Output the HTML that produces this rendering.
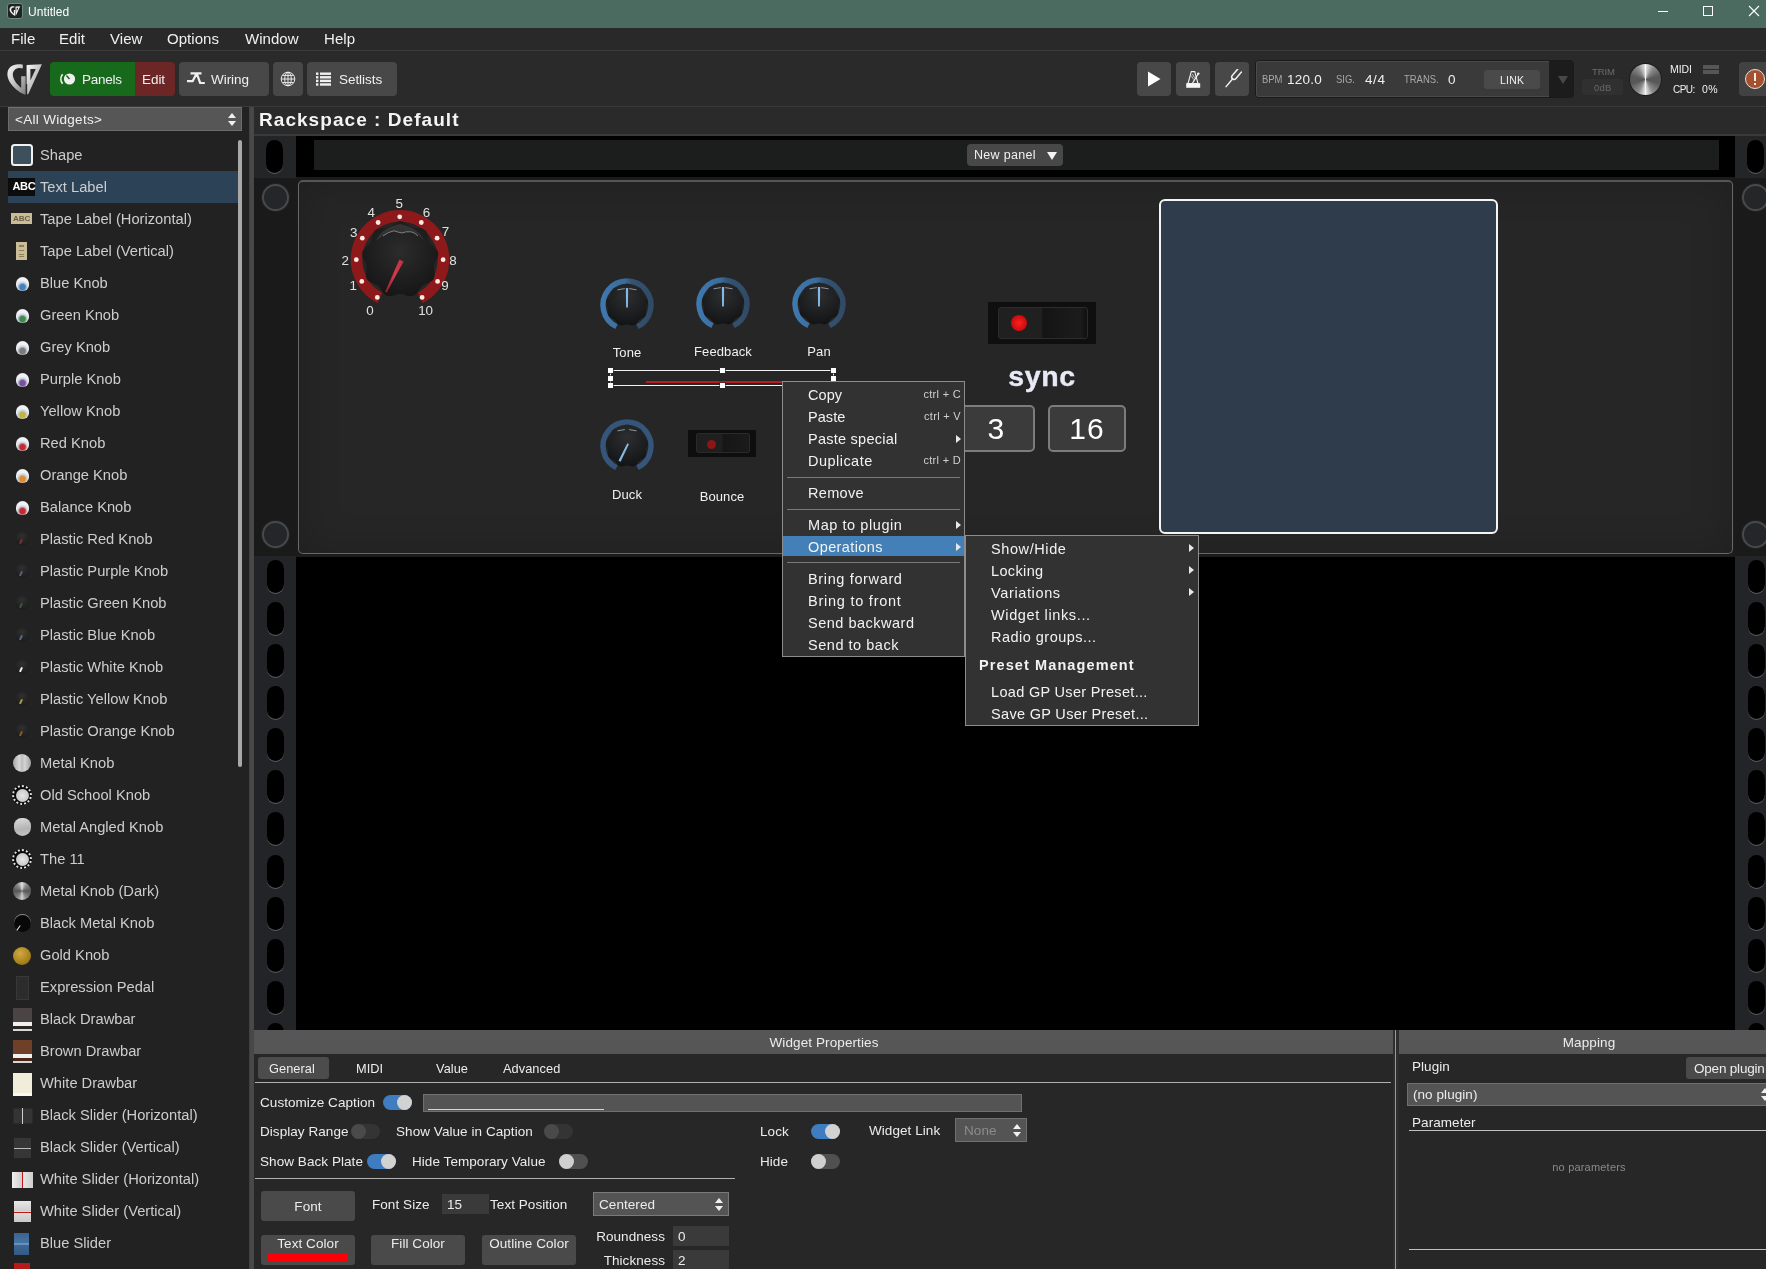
<!DOCTYPE html>
<html>
<head>
<meta charset="utf-8">
<title>Untitled</title>
<style>
*{box-sizing:border-box;margin:0;padding:0}
html,body{width:1766px;height:1269px;overflow:hidden;background:#242424}
body{font-family:"Liberation Sans",sans-serif;color:#e4e4e4;position:relative;font-size:14px;will-change:transform}
.a{position:absolute}
.t{position:absolute;white-space:nowrap;line-height:1}
/* ---------- title bar ---------- */
#titlebar{left:0;top:0;width:1766px;height:28px;background:#4b6b61}
#menubar{left:0;top:28px;width:1766px;height:22px;background:#292929}
#menubar .t{top:3px;font-size:15px;letter-spacing:.05px;color:#f0f0f0}
#toolbar{left:0;top:50px;width:1766px;height:57px;background:#2a2a2a;border-top:1px solid #3c3c3c;border-bottom:1px solid #3a3a3a}
.tb{position:absolute;top:62px;height:34px;background:#484848;border-radius:4px}
.tb .t{top:11px;font-size:13.5px;letter-spacing:-.05px;color:#f0f0f0}
/* ---------- sidebar ---------- */
#sidebar{left:0;top:107px;width:249px;height:1162px;background:#222222}
#divider{left:249px;top:107px;width:5px;height:1162px;background:linear-gradient(90deg,#3e3e3e,#4a4a4a 40%,#464646)}
.li{position:absolute;left:40px;font-size:14.7px;letter-spacing:0px;color:#cdcdcd;white-space:nowrap;line-height:1}
.ic{position:absolute}
/* ---------- center ---------- */
#rshead{left:254px;top:107px;width:1512px;height:28px;background:#2a2a2a}
#rack{left:254px;top:135.5px;width:1512px;height:895.5px;background:#000}
/* ---------- menus ---------- */
.menu{position:absolute;background:#323232;border:1px solid #8c8c8c}
.mi{position:absolute;white-space:nowrap;line-height:1;font-size:14.5px;letter-spacing:.42px;color:#f2f2f2}
.sc{position:absolute;white-space:nowrap;line-height:1;font-size:11px;letter-spacing:.3px;color:#d0d0d0}
.sep{position:absolute;height:1px;background:#7a7a7a}
.arr{position:absolute;width:0;height:0;border-top:4px solid transparent;border-bottom:4px solid transparent;border-left:5px solid #e8e8e8}
/* ---------- props ---------- */
.pl{position:absolute;white-space:nowrap;line-height:1;font-size:13.5px;letter-spacing:.06px;color:#ececec}
.btn{position:absolute;background:#4a4a4a;border-radius:3px}
.tog{position:absolute;width:29px;height:15px;border-radius:8px}
.tog i{position:absolute;top:0;width:15px;height:15px;border-radius:8px;display:block}
.tog.on{background:#3f7cc0}.tog.on i{right:0;background:#d2d2d2}
.tog.off{background:#505050}.tog.off i{left:0;background:#cfcfcf}
.tog.dis{background:#343434}.tog.dis i{left:0;background:#4a4a4a}
</style>
</head>
<body>
<!-- TITLEBAR -->
<div id="titlebar" class="a">
  <svg class="a" style="left:7px;top:3px" width="16" height="16" viewBox="0 0 16 16"><rect x=".5" y=".5" width="15" height="15" rx="2.5" fill="#1f2322" stroke="#6f8a80" stroke-width="1"/><g transform="translate(2.1 2.6) scale(.31)" fill="#f0f0f0"><path d="M16.8 2.8 C12 1.6 6 2.6 3 6.6 C0.4 10.6 1.2 16 4 20.4 C7.2 25.4 12 29.4 18.4 32.6 L19.6 32.6 L19.6 14.2 L15.2 14.2 L15.2 26 C11.6 23 8.2 19 7.2 15 C6.2 11 7.6 8 11 6.6 C13 5.9 15 6 16.8 6.6 Z"/><path fill-rule="evenodd" d="M20.6 2.9 L35.9 2.3 L22.2 32.2 L21.2 32.2 L21.2 22 L20.6 22 Z M24.4 7 L29.8 7 L24.4 18.6 Z"/></g></svg>
  <div class="t" style="left:28px;top:6px;font-size:12px;letter-spacing:.08px;color:#fff">Untitled</div>
  <div class="a" style="left:1658px;top:11px;width:10px;height:1px;background:#fff"></div>
  <div class="a" style="left:1703px;top:6px;width:10px;height:10px;border:1px solid #fff"></div>
  <svg class="a" style="left:1748px;top:5px" width="12" height="12" viewBox="0 0 12 12"><path d="M1 1L11 11M11 1L1 11" stroke="#fff" stroke-width="1.1" fill="none"/></svg>
</div>
<div id="menubar" class="a">
  <div class="t" style="left:11px">File</div>
  <div class="t" style="left:59px">Edit</div>
  <div class="t" style="left:110px">View</div>
  <div class="t" style="left:167px">Options</div>
  <div class="t" style="left:245px">Window</div>
  <div class="t" style="left:324px">Help</div>
</div>
<div id="toolbar" class="a"></div>
<!-- toolbar items (absolute to body) -->
<svg class="a" style="left:6px;top:62px" width="38" height="34" viewBox="0 0 38 34">
  <defs><linearGradient id="gpg" x1="0" y1="0" x2="1" y2="1"><stop offset="0" stop-color="#fafafa"/><stop offset=".5" stop-color="#c4c4c4"/><stop offset="1" stop-color="#7a7a7a"/></linearGradient></defs>
  <path d="M16.8 2.8 C12 1.6 6 2.6 3 6.6 C0.4 10.6 1.2 16 4 20.4 C7.2 25.4 12 29.4 18.4 32.6 L19.6 32.6 L19.6 14.2 L15.2 14.2 L15.2 26 C11.6 23 8.2 19 7.2 15 C6.2 11 7.6 8 11 6.6 C13 5.9 15 6 16.8 6.6 Z" fill="url(#gpg)"/>
  <path fill-rule="evenodd" d="M20.6 2.9 L35.9 2.3 L22.2 32.2 L21.2 32.2 L21.2 22 L20.6 22 Z M24.4 7 L29.8 7 L24.4 18.6 Z" fill="url(#gpg)"/>
</svg>
<div class="tb" style="left:50px;width:85px;background:#176a1b;border-radius:4px 0 0 4px">
  <svg class="a" style="left:9px;top:9px" width="18" height="16" viewBox="0 0 18 16"><circle cx="10.5" cy="8" r="5.6" fill="#f0f0f0"/><path d="M10.5 8 L7.4 4.6" stroke="#176a1b" stroke-width="1.5"/><path d="M3.6 3.2 A7.6 7.6 0 0 0 3.6 12.8" stroke="#f0f0f0" stroke-width="1.7" fill="none"/></svg>
  <div class="t" style="left:32px;letter-spacing:-.25px">Panels</div>
</div>
<div class="tb" style="left:135px;width:40px;background:#6c2626;border-radius:0 4px 4px 0"><div class="t" style="left:7px">Edit</div></div>
<div class="tb" style="left:179px;width:90px">
  <svg class="a" style="left:7px;top:9px" width="20" height="15" viewBox="0 0 20 15"><path d="M4.5 2.4 H15.5 M1 10.2 H6.6 L10.2 3.2 M11 3.2 L14.2 12 H18.8" stroke="#f0f0f0" stroke-width="2.2" fill="none" stroke-linejoin="round"/></svg>
  <div class="t" style="left:32px">Wiring</div>
</div>
<div class="tb" style="left:273px;width:30px">
  <svg class="a" style="left:7px;top:9px" width="16" height="16" viewBox="0 0 16 16"><g stroke="#f0f0f0" stroke-width=".95" fill="none"><circle cx="8" cy="8" r="6.8"/><ellipse cx="8" cy="8" rx="3.3" ry="6.8"/><path d="M1.2 8H14.8M8 1.2V14.8M2.6 4.4H13.4M2.6 11.6H13.4"/></g></svg>
</div>
<div class="tb" style="left:307px;width:90px">
  <svg class="a" style="left:9px;top:10px" width="15" height="14" viewBox="0 0 15 14"><g fill="#f0f0f0"><rect x="0" y="0.5" width="2.4" height="2.4"/><rect x="4" y="0.5" width="11" height="2.4"/><rect x="0" y="4.1" width="2.4" height="2.4"/><rect x="4" y="4.1" width="11" height="2.4"/><rect x="0" y="7.7" width="2.4" height="2.4"/><rect x="4" y="7.7" width="11" height="2.4"/><rect x="0" y="11.3" width="2.4" height="2.4"/><rect x="4" y="11.3" width="11" height="2.4"/></g></svg>
  <div class="t" style="left:32px">Setlists</div>
</div>
<!-- transport -->
<div class="tb" style="left:1137px;width:34px"><svg class="a" style="left:10px;top:9px" width="14" height="16" viewBox="0 0 14 16"><path d="M1 0.5L13.5 8L1 15.5Z" fill="#fff"/></svg></div>
<div class="tb" style="left:1176px;width:34px"><svg class="a" style="left:9px;top:8px" width="17" height="19" viewBox="0 0 17 19"><path d="M6.3 1.6H9.7L13 13.5H3Z" fill="none" stroke="#f0f0f0" stroke-width="1.1"/><rect x="1.2" y="13.2" width="14" height="4.6" fill="#f6f6f6"/><path d="M7.6 13L13.4 3.6" stroke="#f6f6f6" stroke-width="1.2"/><circle cx="13.3" cy="3.6" r="1.2" fill="#f6f6f6"/><path d="M6.2 5.5L8.6 9.5M7.4 4L9.6 7.8" stroke="#f0f0f0" stroke-width=".7"/></svg></div>
<div class="tb" style="left:1215px;width:34px"><svg class="a" style="left:8px;top:7px" width="19" height="20" viewBox="0 0 19 20"><g transform="translate(10.5 8.8) rotate(40)" stroke="#f0f0f0" stroke-width="1.5" fill="none" stroke-linecap="round"><path d="M0 11.5V1.6"/><path d="M-2.4 -9.5V-1 A2.4 2.4 0 0 0 2.4 -1V-9.5"/></g></svg></div>
<div class="a" style="left:1255px;top:60px;width:319px;height:38px;background:#1c1c1c;border-radius:4px;border:1px solid #1a1a1a"></div>
<div class="a" style="left:1256px;top:61px;width:293px;height:36px;background:#3a3a3a;border-radius:3px 0 0 3px;border:1px solid #4a4a4a;border-right:0"></div>
<div class="t" style="left:1262px;top:74px;font-size:10.5px;letter-spacing:0;color:#a8a8a8;transform:scaleX(.9);transform-origin:0 50%">BPM</div>
<div class="t" style="left:1287px;top:73px;font-size:13.5px;letter-spacing:.25px;color:#f0f0f0">120.0</div>
<div class="t" style="left:1336px;top:74px;font-size:10.5px;letter-spacing:0;color:#a8a8a8;transform:scaleX(.9);transform-origin:0 50%">SIG.</div>
<div class="t" style="left:1365px;top:73px;font-size:13.5px;letter-spacing:.6px;color:#f0f0f0">4/4</div>
<div class="t" style="left:1404px;top:74px;font-size:10.5px;letter-spacing:0;color:#a8a8a8;transform:scaleX(.9);transform-origin:0 50%">TRANS.</div>
<div class="t" style="left:1448px;top:73px;font-size:13.5px;letter-spacing:.4px;color:#f0f0f0">0</div>
<div class="a" style="left:1484px;top:70px;width:56px;height:19px;background:#4a4a4a;border-radius:3px"></div>
<div class="t" style="left:1500px;top:75px;font-size:10.5px;letter-spacing:.2px;color:#f0f0f0">LINK</div>
<div class="a" style="left:1558px;top:76px;width:0;height:0;border-left:5px solid transparent;border-right:5px solid transparent;border-top:8px solid #484848"></div>
<div class="t" style="left:1592px;top:67px;font-size:9.5px;letter-spacing:-.1px;color:#6c6c6c">TRIM</div>
<div class="a" style="left:1582px;top:79px;width:41px;height:16px;background:#303030;border-radius:2px"></div>
<div class="t" style="left:1594px;top:83px;font-size:9.5px;letter-spacing:.2px;color:#686868">0dB</div>
<div class="a" style="left:1629px;top:63px;width:33px;height:33px;border-radius:17px;background:#1c1c1c"></div>
<div class="a" style="left:1630px;top:64px;width:31px;height:31px;border-radius:16px;background:conic-gradient(from 0deg,#f2f2f2 0deg,#cfcfcf 8deg,#8a8a8a 35deg,#5a5a5a 75deg,#565656 105deg,#8c8c8c 150deg,#dcdcdc 175deg,#ededed 180deg,#dcdcdc 185deg,#8c8c8c 210deg,#565656 255deg,#5a5a5a 285deg,#8a8a8a 325deg,#cfcfcf 352deg,#f2f2f2 360deg)"></div>
<div class="a" style="left:1645px;top:65px;width:1.4px;height:29px;background:linear-gradient(#fff,rgba(255,255,255,.15) 45%,rgba(255,255,255,.15) 55%,#f4f4f4)"></div>
<div class="t" style="left:1670px;top:64px;font-size:10.5px;letter-spacing:-.05px;color:#f0f0f0">MIDI</div>
<div class="a" style="left:1703px;top:65px;width:16px;height:3.5px;background:#565656"></div>
<div class="a" style="left:1703px;top:70px;width:16px;height:3.5px;background:#565656"></div>
<div class="t" style="left:1673px;top:85px;font-size:10px;letter-spacing:-.55px;color:#f0f0f0">CPU:</div>
<div class="t" style="left:1702px;top:84px;font-size:10.5px;letter-spacing:.5px;color:#f0f0f0">0%</div>
<div class="tb" style="left:1739px;width:34px;background:#424242"><div class="a" style="left:6px;top:7px;width:20px;height:20px;border-radius:10px;background:#a5502f;border:1.5px solid #e9dfd8"></div><div class="a" style="left:15px;top:11px;width:2.4px;height:8px;background:#f2ece8"></div><div class="a" style="left:15px;top:21px;width:2.4px;height:2.4px;background:#f2ece8"></div></div>
<!-- SIDEBAR -->
<div id="sidebar" class="a">
<div class="a" style="left:8px;top:0px;width:234px;height:24px;background:#565656;border:1px solid #6c6c6c;border-top-color:#707070"></div>
<div class="t" style="left:15px;top:6px;font-size:13.5px;letter-spacing:.3px;color:#f0f0f0">&lt;All Widgets&gt;</div>
<div class="a" style="left:228px;top:6px;width:0;height:0;border-left:4px solid transparent;border-right:4px solid transparent;border-bottom:5px solid #f0f0f0"></div>
<div class="a" style="left:228px;top:14px;width:0;height:0;border-left:4px solid transparent;border-right:4px solid transparent;border-top:5px solid #f0f0f0"></div>
<div class="a" style="left:8px;top:64px;width:230px;height:32px;background:#2b4257"></div>
<div class="a" style="left:238px;top:33px;width:4px;height:627px;background:#a9a9a9;border-radius:2px"></div>
<div class="li" style="top:41px">Shape</div>
<div class="a" style="left:11px;top:37px;width:22px;height:22px;background:#3e505c;border:2px solid #eef2f2;border-radius:3.5px"></div>
<div class="li" style="top:73px">Text Label</div>
<div class="a" style="left:8px;top:71px;width:27px;height:18px;background:#0c0c0c"></div>
<div class="t" style="left:12.5px;top:74px;font-size:11px;font-weight:bold;letter-spacing:-.35px;color:#fff">ABC</div>
<div class="li" style="top:105px">Tape Label (Horizontal)</div>
<div class="a" style="left:11px;top:106px;width:21px;height:11px;background:#c9bc96"></div>
<div class="t" style="left:13px;top:108px;font-size:8px;font-weight:bold;color:#6a6048">ABC</div>
<div class="li" style="top:137px">Tape Label (Vertical)</div>
<div class="a" style="left:16px;top:135px;width:11px;height:18px;background:#c9bc96"></div>
<div class="a" style="left:19px;top:138px;width:5px;height:12px;border:1px solid #8a7e5e;border-left:0;border-right:0;background:repeating-linear-gradient(#8a7e5e 0 1px,transparent 1px 4px)"></div>
<div class="li" style="top:169px">Blue Knob</div>
<div class="a" style="left:16px;top:170px;width:12.5px;height:13.5px;border-radius:6.5px 6.5px 6px 6px;background:radial-gradient(circle at 50% 72%,#3f82c0 0 2.6px,#c9d2dc 4.6px,#eef1f5 6.5px)"></div>
<div class="li" style="top:201px">Green Knob</div>
<div class="a" style="left:16px;top:202px;width:12.5px;height:13.5px;border-radius:6.5px 6.5px 6px 6px;background:radial-gradient(circle at 50% 72%,#3f8a4a 0 2.6px,#c9d2dc 4.6px,#eef1f5 6.5px)"></div>
<div class="li" style="top:233px">Grey Knob</div>
<div class="a" style="left:16px;top:234px;width:12.5px;height:13.5px;border-radius:6.5px 6.5px 6px 6px;background:radial-gradient(circle at 50% 72%,#7a7a7a 0 2.6px,#c9d2dc 4.6px,#eef1f5 6.5px)"></div>
<div class="li" style="top:265px">Purple Knob</div>
<div class="a" style="left:16px;top:266px;width:12.5px;height:13.5px;border-radius:6.5px 6.5px 6px 6px;background:radial-gradient(circle at 50% 72%,#7d4fa0 0 2.6px,#c9d2dc 4.6px,#eef1f5 6.5px)"></div>
<div class="li" style="top:297px">Yellow Knob</div>
<div class="a" style="left:16px;top:298px;width:12.5px;height:13.5px;border-radius:6.5px 6.5px 6px 6px;background:radial-gradient(circle at 50% 72%,#c4b43c 0 2.6px,#c9d2dc 4.6px,#eef1f5 6.5px)"></div>
<div class="li" style="top:329px">Red Knob</div>
<div class="a" style="left:16px;top:330px;width:12.5px;height:13.5px;border-radius:6.5px 6.5px 6px 6px;background:radial-gradient(circle at 50% 72%,#c42a30 0 2.6px,#c9d2dc 4.6px,#eef1f5 6.5px)"></div>
<div class="li" style="top:361px">Orange Knob</div>
<div class="a" style="left:16px;top:362px;width:12.5px;height:13.5px;border-radius:6.5px 6.5px 6px 6px;background:radial-gradient(circle at 50% 72%,#e58a2c 0 2.6px,#c9d2dc 4.6px,#eef1f5 6.5px)"></div>
<div class="li" style="top:393px">Balance Knob</div>
<div class="a" style="left:16px;top:394px;width:12.5px;height:13.5px;border-radius:6.5px 6.5px 6px 6px;background:radial-gradient(circle at 50% 72%,#c42a30 0 2.6px,#c9d2dc 4.6px,#eef1f5 6.5px)"></div>
<div class="li" style="top:425px">Plastic Red Knob</div>
<div class="a" style="left:15px;top:425px;width:14px;height:14px;border-radius:7px;background:radial-gradient(circle at 50% 30%,#303030,#222 55%,#161616)"></div>
<div class="a" style="left:20px;top:432px;width:1.6px;height:5px;background:#8a2a2a;transform:rotate(25deg)"></div>
<div class="li" style="top:457px">Plastic Purple Knob</div>
<div class="a" style="left:15px;top:457px;width:14px;height:14px;border-radius:7px;background:radial-gradient(circle at 50% 30%,#303030,#222 55%,#161616)"></div>
<div class="a" style="left:20px;top:464px;width:1.6px;height:5px;background:#6a5a7a;transform:rotate(25deg)"></div>
<div class="li" style="top:489px">Plastic Green Knob</div>
<div class="a" style="left:15px;top:489px;width:14px;height:14px;border-radius:7px;background:radial-gradient(circle at 50% 30%,#303030,#222 55%,#161616)"></div>
<div class="a" style="left:20px;top:496px;width:1.6px;height:5px;background:#3a5a3a;transform:rotate(25deg)"></div>
<div class="li" style="top:521px">Plastic Blue Knob</div>
<div class="a" style="left:15px;top:521px;width:14px;height:14px;border-radius:7px;background:radial-gradient(circle at 50% 30%,#303030,#222 55%,#161616)"></div>
<div class="a" style="left:20px;top:528px;width:1.6px;height:5px;background:#5a6a8a;transform:rotate(25deg)"></div>
<div class="li" style="top:553px">Plastic White Knob</div>
<div class="a" style="left:15px;top:553px;width:14px;height:14px;border-radius:7px;background:radial-gradient(circle at 50% 30%,#303030,#222 55%,#161616)"></div>
<div class="a" style="left:20px;top:560px;width:1.6px;height:5px;background:#f0f0f0;transform:rotate(25deg)"></div>
<div class="li" style="top:585px">Plastic Yellow Knob</div>
<div class="a" style="left:15px;top:585px;width:14px;height:14px;border-radius:7px;background:radial-gradient(circle at 50% 30%,#303030,#222 55%,#161616)"></div>
<div class="a" style="left:20px;top:592px;width:1.6px;height:5px;background:#aa9a3a;transform:rotate(25deg)"></div>
<div class="li" style="top:617px">Plastic Orange Knob</div>
<div class="a" style="left:15px;top:617px;width:14px;height:14px;border-radius:7px;background:radial-gradient(circle at 50% 30%,#303030,#222 55%,#161616)"></div>
<div class="a" style="left:20px;top:624px;width:1.6px;height:5px;background:#8a5a2a;transform:rotate(25deg)"></div>
<div class="li" style="top:649px">Metal Knob</div>
<div class="a" style="left:13px;top:647px;width:18px;height:18px;border-radius:9px;background:linear-gradient(90deg,#a8a8a8,#d8d8d8 35%,#bcbcbc 50%,#d4d4d4 65%,#a0a0a0)"></div>
<div class="li" style="top:681px">Old School Knob</div>
<div class="a" style="left:12px;top:678px;width:20px;height:20px;border-radius:10px;background:#0a0a0a;border:2px dotted #e0e0e0"></div>
<div class="a" style="left:15.5px;top:681.5px;width:13px;height:13px;border-radius:7px;background:radial-gradient(#e6e6e6,#bdbdbd)"></div>
<div class="li" style="top:713px">Metal Angled Knob</div>
<div class="a" style="left:14px;top:711px;width:16.5px;height:18px;border-radius:8px 8px 9px 9px;background:linear-gradient(170deg,#dcdcdc,#b4b4b4 60%,#c8c8c8)"></div>
<div class="li" style="top:745px">The 11</div>
<div class="a" style="left:12px;top:742px;width:20px;height:20px;border-radius:10px;background:#0a0a0a;border:2px dotted #e0e0e0"></div>
<div class="a" style="left:15.5px;top:745.5px;width:13px;height:13px;border-radius:7px;background:radial-gradient(#e6e6e6,#bdbdbd)"></div>
<div class="li" style="top:777px">Metal Knob (Dark)</div>
<div class="a" style="left:13px;top:775px;width:18px;height:18px;border-radius:9px;background:conic-gradient(from 0deg,#e0e0e0,#8a8a8a 35deg,#555 90deg,#8a8a8a 150deg,#d0d0d0 180deg,#8a8a8a 210deg,#555 270deg,#8a8a8a 325deg,#e0e0e0)"></div>
<div class="li" style="top:809px">Black Metal Knob</div>
<div class="a" style="left:14px;top:808px;width:16.5px;height:16.5px;border-radius:9px;background:#080808;box-shadow:0 -1px 0 0 #8a8a8a"></div>
<div class="a" style="left:18px;top:818px;width:1.4px;height:6px;background:#e0e0e0;transform:rotate(35deg)"></div>
<div class="li" style="top:841px">Gold Knob</div>
<div class="a" style="left:13px;top:840px;width:17.5px;height:17.5px;border-radius:9px;background:radial-gradient(circle at 40% 35%,#d2a944,#a8821e 60%,#7a5c12)"></div>
<div class="li" style="top:873px">Expression Pedal</div>
<div class="a" style="left:16px;top:869px;width:13px;height:24px;background:#2c2c2c;border:1px solid #383838"></div>
<div class="li" style="top:905px">Black Drawbar</div>
<div class="a" style="left:13px;top:901px;width:19px;height:14px;background:#4a4544"></div>
<div class="a" style="left:13px;top:915px;width:19px;height:4px;background:#f0f0f0"></div>
<div class="a" style="left:13px;top:919px;width:19px;height:3px;background:#2a2624"></div>
<div class="a" style="left:13px;top:922px;width:19px;height:2px;background:#d8d8d8"></div>
<div class="li" style="top:937px">Brown Drawbar</div>
<div class="a" style="left:13px;top:933px;width:19px;height:14px;background:#6f3f27"></div>
<div class="a" style="left:13px;top:947px;width:19px;height:4px;background:#f0f0f0"></div>
<div class="a" style="left:13px;top:951px;width:19px;height:3px;background:#4a2512"></div>
<div class="a" style="left:13px;top:954px;width:19px;height:2px;background:#d8d8d8"></div>
<div class="li" style="top:969px">White Drawbar</div>
<div class="a" style="left:13px;top:966px;width:19px;height:23px;background:#f1eddb;border-bottom:3px solid #fbf9ee"></div>
<div class="li" style="top:1001px">Black Slider (Horizontal)</div>
<div class="a" style="left:13px;top:1001px;width:20px;height:16px;background:#343434;border:1px solid #2a2a2a"></div>
<div class="a" style="left:22px;top:1001px;width:1px;height:16px;background:#d0d0d0"></div>
<div class="li" style="top:1033px">Black Slider (Vertical)</div>
<div class="a" style="left:14px;top:1031px;width:17px;height:20px;background:#363636"></div>
<div class="a" style="left:14px;top:1041px;width:17px;height:1px;background:#b8b8b8"></div>
<div class="li" style="top:1065px">White Slider (Horizontal)</div>
<div class="a" style="left:12px;top:1065px;width:21px;height:16px;background:linear-gradient(90deg,#efefef,#d0d0d0 45%,#e4e4e4 55%,#cfcfcf)"></div>
<div class="a" style="left:22px;top:1065px;width:1px;height:16px;background:#c01818"></div>
<div class="li" style="top:1097px">White Slider (Vertical)</div>
<div class="a" style="left:14px;top:1094px;width:17px;height:21px;background:linear-gradient(#e8e8e8,#cfcfcf 45%,#dedede 55%,#c8c8c8)"></div>
<div class="a" style="left:14px;top:1105px;width:17px;height:1px;background:#c01818"></div>
<div class="li" style="top:1129px">Blue Slider</div>
<div class="a" style="left:14px;top:1126px;width:15px;height:22px;background:linear-gradient(#3a6490,#4674a4 45%,#86a8cc 50%,#3c6694 56%,#345a84)"></div>
<div class="a" style="left:14px;top:1156px;width:16px;height:8px;background:#b41c1c"></div>
</div>
<div id="divider" class="a"></div>
<!-- CENTER -->
<div id="rshead" class="a"></div>
<div id="rack" class="a"></div>
<!-- RACK CONTENT -->
<div class="t" style="left:259px;top:110px;font-size:19px;font-weight:bold;letter-spacing:1.05px;color:#f4f4f4">Rackspace : Default</div>
<div class="a" style="left:254px;top:135px;width:42px;height:43px;background:#242527"></div>
<div class="a" style="left:254px;top:178px;width:42px;height:378px;background:#1a1a1a"></div>
<div class="a" style="left:254px;top:556px;width:42px;height:475px;background:#232427"></div>
<div class="a" style="left:1735px;top:135px;width:31px;height:43px;background:#242527"></div>
<div class="a" style="left:1735px;top:178px;width:31px;height:378px;background:#1a1a1a"></div>
<div class="a" style="left:1735px;top:556px;width:31px;height:475px;background:#232427"></div>
<div class="a" style="left:266px;top:140px;width:17px;height:33px;border-radius:9px;background:#000;box-shadow:0 1px 0 0 #5a5c60"></div>
<div class="a" style="left:1747px;top:140px;width:17px;height:33px;border-radius:9px;background:#000;box-shadow:0 1px 0 0 #5a5c60"></div>
<div class="a" style="left:254px;top:556px;width:1512px;height:475px;overflow:hidden;background:transparent">
<div class="a" style="left:12.5px;top:4px;width:17px;height:33px;border-radius:9px;background:#000;box-shadow:0 1px 0 0 #5a5c60"></div>
<div class="a" style="left:1493.5px;top:4px;width:17px;height:33px;border-radius:9px;background:#000;box-shadow:0 1px 0 0 #5a5c60"></div>
<div class="a" style="left:12.5px;top:46px;width:17px;height:33px;border-radius:9px;background:#000;box-shadow:0 1px 0 0 #5a5c60"></div>
<div class="a" style="left:1493.5px;top:46px;width:17px;height:33px;border-radius:9px;background:#000;box-shadow:0 1px 0 0 #5a5c60"></div>
<div class="a" style="left:12.5px;top:88px;width:17px;height:33px;border-radius:9px;background:#000;box-shadow:0 1px 0 0 #5a5c60"></div>
<div class="a" style="left:1493.5px;top:88px;width:17px;height:33px;border-radius:9px;background:#000;box-shadow:0 1px 0 0 #5a5c60"></div>
<div class="a" style="left:12.5px;top:130px;width:17px;height:33px;border-radius:9px;background:#000;box-shadow:0 1px 0 0 #5a5c60"></div>
<div class="a" style="left:1493.5px;top:130px;width:17px;height:33px;border-radius:9px;background:#000;box-shadow:0 1px 0 0 #5a5c60"></div>
<div class="a" style="left:12.5px;top:172px;width:17px;height:33px;border-radius:9px;background:#000;box-shadow:0 1px 0 0 #5a5c60"></div>
<div class="a" style="left:1493.5px;top:172px;width:17px;height:33px;border-radius:9px;background:#000;box-shadow:0 1px 0 0 #5a5c60"></div>
<div class="a" style="left:12.5px;top:214px;width:17px;height:33px;border-radius:9px;background:#000;box-shadow:0 1px 0 0 #5a5c60"></div>
<div class="a" style="left:1493.5px;top:214px;width:17px;height:33px;border-radius:9px;background:#000;box-shadow:0 1px 0 0 #5a5c60"></div>
<div class="a" style="left:12.5px;top:256px;width:17px;height:33px;border-radius:9px;background:#000;box-shadow:0 1px 0 0 #5a5c60"></div>
<div class="a" style="left:1493.5px;top:256px;width:17px;height:33px;border-radius:9px;background:#000;box-shadow:0 1px 0 0 #5a5c60"></div>
<div class="a" style="left:12.5px;top:299px;width:17px;height:33px;border-radius:9px;background:#000;box-shadow:0 1px 0 0 #5a5c60"></div>
<div class="a" style="left:1493.5px;top:299px;width:17px;height:33px;border-radius:9px;background:#000;box-shadow:0 1px 0 0 #5a5c60"></div>
<div class="a" style="left:12.5px;top:341px;width:17px;height:33px;border-radius:9px;background:#000;box-shadow:0 1px 0 0 #5a5c60"></div>
<div class="a" style="left:1493.5px;top:341px;width:17px;height:33px;border-radius:9px;background:#000;box-shadow:0 1px 0 0 #5a5c60"></div>
<div class="a" style="left:12.5px;top:383px;width:17px;height:33px;border-radius:9px;background:#000;box-shadow:0 1px 0 0 #5a5c60"></div>
<div class="a" style="left:1493.5px;top:383px;width:17px;height:33px;border-radius:9px;background:#000;box-shadow:0 1px 0 0 #5a5c60"></div>
<div class="a" style="left:12.5px;top:425px;width:17px;height:33px;border-radius:9px;background:#000;box-shadow:0 1px 0 0 #5a5c60"></div>
<div class="a" style="left:1493.5px;top:425px;width:17px;height:33px;border-radius:9px;background:#000;box-shadow:0 1px 0 0 #5a5c60"></div>
<div class="a" style="left:12.5px;top:467px;width:17px;height:33px;border-radius:9px;background:#000;box-shadow:0 1px 0 0 #5a5c60"></div>
<div class="a" style="left:1493.5px;top:467px;width:17px;height:33px;border-radius:9px;background:#000;box-shadow:0 1px 0 0 #5a5c60"></div>
</div>
<div class="a" style="left:262px;top:184px;width:27px;height:27px;border-radius:14px;background:#252627;border:2.5px solid #464a4e;box-shadow:0 0 0 1px #222324"></div>
<div class="a" style="left:262px;top:521px;width:27px;height:27px;border-radius:14px;background:#252627;border:2.5px solid #464a4e;box-shadow:0 0 0 1px #222324"></div>
<div class="a" style="left:1742px;top:184px;width:27px;height:27px;border-radius:14px;background:#252627;border:2.5px solid #464a4e;box-shadow:0 0 0 1px #222324"></div>
<div class="a" style="left:1742px;top:521px;width:27px;height:27px;border-radius:14px;background:#252627;border:2.5px solid #464a4e;box-shadow:0 0 0 1px #222324"></div>
<div class="a" style="left:296px;top:177px;width:1439px;height:379.5px;background:#1b1b1b"></div>
<div class="a" style="left:254px;top:134px;width:1512px;height:1.5px;background:#3a3a3a"></div>
<div class="a" style="left:314px;top:140px;width:1405px;height:30px;background:#1c1e1e"></div>
<div class="a" style="left:967px;top:144px;width:96px;height:22px;background:#484848;border-radius:4px"></div>
<div class="t" style="left:974px;top:149px;font-size:12.5px;letter-spacing:.3px;color:#f0f0f0">New panel</div>
<div class="a" style="left:1047px;top:152px;width:0;height:0;border-left:5px solid transparent;border-right:5px solid transparent;border-top:8px solid #f4f4f4"></div>
<div class="a" style="left:298px;top:180px;width:1435px;height:374px;background:#262626;border:1px solid #686868;border-top:2px solid #565656;border-radius:5px;box-shadow:inset 0 0 40px rgba(0,0,0,.18)"></div>
<div class="a" style="left:1159px;top:199px;width:339px;height:335px;background:#2e3c4c;border:2px solid #f4f4f4;border-radius:6px"></div>
<svg class="a" style="left:320px;top:181px" width="160" height="160" viewBox="320 181 160 160"><defs><radialGradient id="bk" cx=".5" cy=".4" r=".7"><stop offset="0" stop-color="#2c2c2c"/><stop offset=".6" stop-color="#1d1d1d"/><stop offset="1" stop-color="#131313"/></radialGradient><linearGradient id="ptr" x1="0" y1="0" x2="1" y2="0"><stop offset="0" stop-color="#9a1c2a"/><stop offset=".5" stop-color="#d03a4c"/><stop offset="1" stop-color="#c23044"/></linearGradient></defs><path d="M379.9 298.0 A43.5 43.5 0 1 1 420.1 298.0" stroke="#8d191b" stroke-width="11.6" fill="none"/><polygon points="400.2,221.1 400.9,221.1 401.5,221.2 402.2,221.4 402.9,221.6 403.5,221.9 404.1,222.2 404.8,222.5 405.4,222.9 405.9,223.3 406.5,223.8 407.1,224.2 407.6,224.6 408.2,225.1 408.7,225.5 409.2,225.9 409.8,226.2 410.3,226.6 410.8,226.9 411.4,227.1 411.9,227.4 412.5,227.6 413.1,227.7 413.7,227.8 414.3,227.9 415.0,228.0 415.6,228.0 416.3,228.0 417.0,228.0 417.7,228.1 418.4,228.1 419.1,228.1 419.8,228.2 420.5,228.3 421.2,228.4 421.9,228.6 422.6,228.8 423.2,229.0 423.8,229.3 424.4,229.7 424.9,230.1 425.4,230.6 425.9,231.1 426.3,231.6 426.7,232.2 427.0,232.8 427.3,233.5 427.5,234.1 427.7,234.8 427.9,235.5 428.1,236.2 428.2,236.9 428.4,237.6 428.5,238.3 428.6,238.9 428.8,239.6 429.0,240.2 429.2,240.8 429.4,241.4 429.6,241.9 429.9,242.5 430.2,243.0 430.6,243.4 431.0,243.9 431.4,244.4 431.8,244.8 432.3,245.3 432.8,245.7 433.3,246.2 433.9,246.7 434.4,247.2 434.9,247.6 435.4,248.2 435.9,248.7 436.4,249.2 436.8,249.8 437.2,250.4 437.5,251.0 437.8,251.6 438.0,252.3 438.1,252.9 438.2,253.6 438.2,254.3 438.2,254.9 438.1,255.6 437.9,256.3 437.7,257.0 437.5,257.6 437.2,258.3 436.9,259.0 436.6,259.6 436.3,260.2 435.9,260.8 435.6,261.5 435.3,262.1 435.0,262.6 434.7,263.2 434.5,263.8 434.3,264.4 434.1,265.0 434.0,265.6 433.9,266.1 433.9,266.8 433.8,267.4 433.9,268.0 433.9,268.6 434.0,269.3 434.1,270.0 434.2,270.6 434.3,271.3 434.4,272.0 434.5,272.8 434.6,273.5 434.6,274.2 434.6,274.9 434.5,275.6 434.4,276.3 434.3,277.0 434.1,277.6 433.9,278.3 433.5,278.9 433.2,279.4 432.8,279.9 432.3,280.4 431.8,280.9 431.2,281.3 430.6,281.7 430.0,282.1 429.4,282.4 428.7,282.7 428.1,283.0 427.4,283.3 426.8,283.5 426.1,283.8 425.5,284.0 424.9,284.3 424.3,284.6 423.7,284.9 423.2,285.2 422.7,285.5 422.2,285.9 421.8,286.3 421.4,286.7 421.0,287.2 420.6,287.7 420.2,288.2 419.9,288.8 419.5,289.3 419.1,289.9 418.8,290.5 418.4,291.1 418.0,291.7 417.6,292.3 417.2,292.9 416.7,293.4 416.2,293.9 415.7,294.4 415.2,294.8 414.6,295.2 414.0,295.5 413.4,295.8 412.7,296.0 412.1,296.1 411.4,296.2 410.7,296.2 410.0,296.2 409.3,296.1 408.6,296.0 407.9,295.8 407.2,295.7 406.5,295.4 405.8,295.2 405.2,295.0 404.5,294.8 403.9,294.6 403.2,294.4 402.6,294.2 402.0,294.1 401.4,294.0 400.8,293.9 400.2,293.9 399.6,293.9 399.0,294.0 398.4,294.1 397.8,294.2 397.2,294.4 396.5,294.6 395.9,294.8 395.2,295.0 394.6,295.2 393.9,295.4 393.2,295.7 392.5,295.8 391.8,296.0 391.1,296.1 390.4,296.2 389.7,296.2 389.0,296.2 388.3,296.1 387.7,296.0 387.0,295.8 386.4,295.5 385.8,295.2 385.2,294.8 384.7,294.4 384.2,293.9 383.7,293.4 383.2,292.9 382.8,292.3 382.4,291.7 382.0,291.1 381.6,290.5 381.3,289.9 380.9,289.3 380.5,288.8 380.2,288.2 379.8,287.7 379.4,287.2 379.0,286.7 378.6,286.3 378.2,285.9 377.7,285.5 377.2,285.2 376.7,284.9 376.1,284.6 375.5,284.3 374.9,284.0 374.3,283.8 373.6,283.5 373.0,283.3 372.3,283.0 371.7,282.7 371.0,282.4 370.4,282.1 369.8,281.7 369.2,281.3 368.6,280.9 368.1,280.4 367.6,279.9 367.2,279.4 366.9,278.9 366.5,278.3 366.3,277.6 366.1,277.0 366.0,276.3 365.9,275.6 365.8,274.9 365.8,274.2 365.8,273.5 365.9,272.8 366.0,272.0 366.1,271.3 366.2,270.6 366.3,270.0 366.4,269.3 366.5,268.6 366.5,268.0 366.6,267.4 366.5,266.8 366.5,266.1 366.4,265.6 366.3,265.0 366.1,264.4 365.9,263.8 365.7,263.2 365.4,262.6 365.1,262.1 364.8,261.5 364.5,260.8 364.1,260.2 363.8,259.6 363.5,259.0 363.2,258.3 362.9,257.6 362.7,257.0 362.5,256.3 362.3,255.6 362.2,254.9 362.2,254.3 362.2,253.6 362.3,252.9 362.4,252.3 362.6,251.6 362.9,251.0 363.2,250.4 363.6,249.8 364.0,249.2 364.5,248.7 365.0,248.2 365.5,247.6 366.0,247.2 366.5,246.7 367.1,246.2 367.6,245.7 368.1,245.3 368.6,244.8 369.0,244.4 369.4,243.9 369.8,243.4 370.2,243.0 370.5,242.5 370.8,241.9 371.0,241.4 371.2,240.8 371.4,240.2 371.6,239.6 371.8,238.9 371.9,238.3 372.0,237.6 372.2,236.9 372.3,236.2 372.5,235.5 372.7,234.8 372.9,234.1 373.1,233.5 373.4,232.8 373.7,232.2 374.1,231.6 374.5,231.1 375.0,230.6 375.5,230.1 376.0,229.7 376.6,229.3 377.2,229.0 377.8,228.8 378.5,228.6 379.2,228.4 379.9,228.3 380.6,228.2 381.3,228.1 382.0,228.1 382.7,228.1 383.4,228.0 384.1,228.0 384.8,228.0 385.4,228.0 386.1,227.9 386.7,227.8 387.3,227.7 387.9,227.6 388.5,227.4 389.0,227.1 389.6,226.9 390.1,226.6 390.6,226.2 391.2,225.9 391.7,225.5 392.2,225.1 392.8,224.6 393.3,224.2 393.9,223.8 394.5,223.3 395.0,222.9 395.6,222.5 396.3,222.2 396.9,221.9 397.5,221.6 398.2,221.4 398.9,221.2 399.5,221.1" fill="url(#bk)"/><path d="M376 241 Q381 228 400 224 Q419 228 424 241 Q419 234 411 231.8 Q406 231.2 402 233 Q398 232.2 394 230.8 Q385 233 376 241 Z" fill="#353535" opacity=".95"/><path d="M383 236 Q388 232 394 230.8 Q398 232.2 402 233 Q406 231.2 411 231.8 Q415 232.6 418 236" stroke="#8c8c8c" stroke-width="1" fill="none" opacity=".85"/><circle cx="377.3" cy="297.4" r="2.4" fill="#ffe9e4"/><circle cx="361.8" cy="281.4" r="2.4" fill="#ffe9e4"/><circle cx="356.3" cy="259.7" r="2.4" fill="#ffe9e4"/><circle cx="362.3" cy="238.2" r="2.4" fill="#ffe9e4"/><circle cx="378.1" cy="222.5" r="2.4" fill="#ffe9e4"/><circle cx="399.7" cy="216.8" r="2.4" fill="#ffe9e4"/><circle cx="421.3" cy="222.5" r="2.4" fill="#ffe9e4"/><circle cx="437.1" cy="238.2" r="2.4" fill="#ffe9e4"/><circle cx="443.1" cy="259.7" r="2.4" fill="#ffe9e4"/><circle cx="437.6" cy="281.4" r="2.4" fill="#ffe9e4"/><circle cx="422.1" cy="297.4" r="2.4" fill="#ffe9e4"/><path d="M399.4 259.4 L403.6 261.6 L386.6 292.6 L385.2 291.8 Z" fill="url(#ptr)"/></svg>
<div class="t" style="left:355.0px;top:303.9px;width:30px;text-align:center;font-size:13.4px;color:#e0e0e0">0</div>
<div class="t" style="left:338.2px;top:278.9px;width:30px;text-align:center;font-size:13.4px;color:#e0e0e0">1</div>
<div class="t" style="left:330.2px;top:253.6px;width:30px;text-align:center;font-size:13.4px;color:#e0e0e0">2</div>
<div class="t" style="left:338.7px;top:225.7px;width:30px;text-align:center;font-size:13.4px;color:#e0e0e0">3</div>
<div class="t" style="left:356.2px;top:205.9px;width:30px;text-align:center;font-size:13.4px;color:#e0e0e0">4</div>
<div class="t" style="left:384.2px;top:197.4px;width:30px;text-align:center;font-size:13.4px;color:#e0e0e0">5</div>
<div class="t" style="left:411.5px;top:205.5px;width:30px;text-align:center;font-size:13.4px;color:#e0e0e0">6</div>
<div class="t" style="left:430.4px;top:225.4px;width:30px;text-align:center;font-size:13.4px;color:#e0e0e0">7</div>
<div class="t" style="left:438.0px;top:253.6px;width:30px;text-align:center;font-size:13.4px;color:#e0e0e0">8</div>
<div class="t" style="left:430.0px;top:278.9px;width:30px;text-align:center;font-size:13.4px;color:#e0e0e0">9</div>
<div class="t" style="left:410.6px;top:303.9px;width:30px;text-align:center;font-size:13.4px;color:#e0e0e0">10</div>
<svg class="a" style="left:597px;top:275px" width="60" height="60" viewBox="-30 -30 60 60"><defs><radialGradient id="ga" cx=".5" cy=".3" r=".75"><stop offset="0" stop-color="#2c2e30"/><stop offset=".7" stop-color="#1a1b1d"/><stop offset="1" stop-color="#101112"/></radialGradient><linearGradient id="ra" x1="0" y1="0" x2="1" y2="0"><stop offset="0" stop-color="#3f78ae"/><stop offset=".45" stop-color="#3a6c9c"/><stop offset=".6" stop-color="#335474"/><stop offset="1" stop-color="#314b66"/></linearGradient></defs><path d="M-10.5 21.6 A24.0 24.0 0 1 1 10.5 21.6" stroke="url(#ra)" stroke-width="5.4" fill="none"/><polygon points="0.0,-21.4 0.7,-21.3 1.5,-21.2 2.2,-20.9 2.9,-20.5 3.5,-20.1 4.2,-19.7 4.8,-19.2 5.4,-18.8 6.0,-18.5 6.6,-18.2 7.3,-18.0 8.0,-17.9 8.7,-17.8 9.4,-17.7 10.2,-17.7 11.0,-17.6 11.7,-17.4 12.5,-17.2 13.1,-16.8 13.8,-16.4 14.3,-15.9 14.7,-15.3 15.1,-14.6 15.4,-13.9 15.6,-13.1 15.8,-12.4 16.0,-11.6 16.2,-11.0 16.5,-10.3 16.8,-9.7 17.2,-9.1 17.6,-8.6 18.1,-8.1 18.6,-7.5 19.2,-7.0 19.7,-6.4 20.2,-5.8 20.6,-5.1 20.9,-4.4 21.1,-3.7 21.1,-3.0 21.1,-2.2 20.9,-1.5 20.7,-0.7 20.4,-0.0 20.1,0.7 19.8,1.4 19.5,2.0 19.3,2.7 19.1,3.4 19.0,4.0 19.0,4.7 19.0,5.5 19.1,6.2 19.2,7.0 19.2,7.8 19.2,8.5 19.1,9.3 18.9,10.0 18.5,10.7 18.1,11.3 17.6,11.9 17.0,12.3 16.3,12.7 15.6,13.1 14.9,13.4 14.3,13.8 13.6,14.1 13.0,14.5 12.5,14.9 12.0,15.3 11.5,15.8 11.1,16.4 10.6,17.0 10.2,17.7 9.7,18.3 9.2,18.9 8.6,19.4 8.0,19.8 7.3,20.1 6.6,20.3 5.8,20.4 5.1,20.4 4.3,20.3 3.5,20.1 2.8,19.9 2.1,19.7 1.4,19.5 0.7,19.4 0.0,19.4 -0.7,19.4 -1.4,19.5 -2.1,19.7 -2.8,19.9 -3.5,20.1 -4.3,20.3 -5.1,20.4 -5.8,20.4 -6.6,20.3 -7.3,20.1 -8.0,19.8 -8.6,19.4 -9.2,18.9 -9.7,18.3 -10.2,17.7 -10.6,17.0 -11.1,16.4 -11.5,15.8 -12.0,15.3 -12.5,14.9 -13.0,14.5 -13.6,14.1 -14.3,13.8 -14.9,13.4 -15.6,13.1 -16.3,12.7 -17.0,12.3 -17.6,11.9 -18.1,11.3 -18.5,10.7 -18.9,10.0 -19.1,9.3 -19.2,8.5 -19.2,7.8 -19.2,7.0 -19.1,6.2 -19.0,5.5 -19.0,4.7 -19.0,4.0 -19.1,3.4 -19.3,2.7 -19.5,2.0 -19.8,1.4 -20.1,0.7 -20.4,0.0 -20.7,-0.7 -20.9,-1.5 -21.1,-2.2 -21.1,-3.0 -21.1,-3.7 -20.9,-4.4 -20.6,-5.1 -20.2,-5.8 -19.7,-6.4 -19.2,-7.0 -18.6,-7.5 -18.1,-8.1 -17.6,-8.6 -17.2,-9.1 -16.8,-9.7 -16.5,-10.3 -16.2,-11.0 -16.0,-11.6 -15.8,-12.4 -15.6,-13.1 -15.4,-13.9 -15.1,-14.6 -14.7,-15.3 -14.3,-15.9 -13.8,-16.4 -13.1,-16.8 -12.5,-17.2 -11.7,-17.4 -11.0,-17.6 -10.2,-17.7 -9.4,-17.7 -8.7,-17.8 -8.0,-17.9 -7.3,-18.0 -6.6,-18.2 -6.0,-18.5 -5.4,-18.8 -4.8,-19.2 -4.2,-19.7 -3.5,-20.1 -2.9,-20.5 -2.2,-20.9 -1.5,-21.2 -0.7,-21.3" fill="url(#ga)"/><path d="M-9.5 -15.2 L-2.2 -16.4 M2.2 -16.4 L9.5 -15.2" stroke="#b0b8c0" stroke-width=".9" fill="none" opacity=".85"/><g transform="rotate(0)"><path d="M-1.15 -17 L1.15 -17 L0.9 2.5 L-0.9 2.5 Z" fill="#86b8e6"/></g></svg>
<svg class="a" style="left:693px;top:274px" width="60" height="60" viewBox="-30 -30 60 60"><defs><radialGradient id="gb" cx=".5" cy=".3" r=".75"><stop offset="0" stop-color="#2c2e30"/><stop offset=".7" stop-color="#1a1b1d"/><stop offset="1" stop-color="#101112"/></radialGradient><linearGradient id="rb" x1="0" y1="0" x2="1" y2="0"><stop offset="0" stop-color="#3f78ae"/><stop offset=".45" stop-color="#3a6c9c"/><stop offset=".6" stop-color="#335474"/><stop offset="1" stop-color="#314b66"/></linearGradient></defs><path d="M-10.5 21.6 A24.0 24.0 0 1 1 10.5 21.6" stroke="url(#rb)" stroke-width="5.4" fill="none"/><polygon points="0.0,-21.4 0.7,-21.3 1.5,-21.2 2.2,-20.9 2.9,-20.5 3.5,-20.1 4.2,-19.7 4.8,-19.2 5.4,-18.8 6.0,-18.5 6.6,-18.2 7.3,-18.0 8.0,-17.9 8.7,-17.8 9.4,-17.7 10.2,-17.7 11.0,-17.6 11.7,-17.4 12.5,-17.2 13.1,-16.8 13.8,-16.4 14.3,-15.9 14.7,-15.3 15.1,-14.6 15.4,-13.9 15.6,-13.1 15.8,-12.4 16.0,-11.6 16.2,-11.0 16.5,-10.3 16.8,-9.7 17.2,-9.1 17.6,-8.6 18.1,-8.1 18.6,-7.5 19.2,-7.0 19.7,-6.4 20.2,-5.8 20.6,-5.1 20.9,-4.4 21.1,-3.7 21.1,-3.0 21.1,-2.2 20.9,-1.5 20.7,-0.7 20.4,-0.0 20.1,0.7 19.8,1.4 19.5,2.0 19.3,2.7 19.1,3.4 19.0,4.0 19.0,4.7 19.0,5.5 19.1,6.2 19.2,7.0 19.2,7.8 19.2,8.5 19.1,9.3 18.9,10.0 18.5,10.7 18.1,11.3 17.6,11.9 17.0,12.3 16.3,12.7 15.6,13.1 14.9,13.4 14.3,13.8 13.6,14.1 13.0,14.5 12.5,14.9 12.0,15.3 11.5,15.8 11.1,16.4 10.6,17.0 10.2,17.7 9.7,18.3 9.2,18.9 8.6,19.4 8.0,19.8 7.3,20.1 6.6,20.3 5.8,20.4 5.1,20.4 4.3,20.3 3.5,20.1 2.8,19.9 2.1,19.7 1.4,19.5 0.7,19.4 0.0,19.4 -0.7,19.4 -1.4,19.5 -2.1,19.7 -2.8,19.9 -3.5,20.1 -4.3,20.3 -5.1,20.4 -5.8,20.4 -6.6,20.3 -7.3,20.1 -8.0,19.8 -8.6,19.4 -9.2,18.9 -9.7,18.3 -10.2,17.7 -10.6,17.0 -11.1,16.4 -11.5,15.8 -12.0,15.3 -12.5,14.9 -13.0,14.5 -13.6,14.1 -14.3,13.8 -14.9,13.4 -15.6,13.1 -16.3,12.7 -17.0,12.3 -17.6,11.9 -18.1,11.3 -18.5,10.7 -18.9,10.0 -19.1,9.3 -19.2,8.5 -19.2,7.8 -19.2,7.0 -19.1,6.2 -19.0,5.5 -19.0,4.7 -19.0,4.0 -19.1,3.4 -19.3,2.7 -19.5,2.0 -19.8,1.4 -20.1,0.7 -20.4,0.0 -20.7,-0.7 -20.9,-1.5 -21.1,-2.2 -21.1,-3.0 -21.1,-3.7 -20.9,-4.4 -20.6,-5.1 -20.2,-5.8 -19.7,-6.4 -19.2,-7.0 -18.6,-7.5 -18.1,-8.1 -17.6,-8.6 -17.2,-9.1 -16.8,-9.7 -16.5,-10.3 -16.2,-11.0 -16.0,-11.6 -15.8,-12.4 -15.6,-13.1 -15.4,-13.9 -15.1,-14.6 -14.7,-15.3 -14.3,-15.9 -13.8,-16.4 -13.1,-16.8 -12.5,-17.2 -11.7,-17.4 -11.0,-17.6 -10.2,-17.7 -9.4,-17.7 -8.7,-17.8 -8.0,-17.9 -7.3,-18.0 -6.6,-18.2 -6.0,-18.5 -5.4,-18.8 -4.8,-19.2 -4.2,-19.7 -3.5,-20.1 -2.9,-20.5 -2.2,-20.9 -1.5,-21.2 -0.7,-21.3" fill="url(#gb)"/><path d="M-9.5 -15.2 L-2.2 -16.4 M2.2 -16.4 L9.5 -15.2" stroke="#b0b8c0" stroke-width=".9" fill="none" opacity=".85"/><g transform="rotate(0)"><path d="M-1.15 -17 L1.15 -17 L0.9 2.5 L-0.9 2.5 Z" fill="#86b8e6"/></g></svg>
<svg class="a" style="left:789px;top:274px" width="60" height="60" viewBox="-30 -30 60 60"><defs><radialGradient id="gc" cx=".5" cy=".3" r=".75"><stop offset="0" stop-color="#2c2e30"/><stop offset=".7" stop-color="#1a1b1d"/><stop offset="1" stop-color="#101112"/></radialGradient><linearGradient id="rc" x1="0" y1="0" x2="1" y2="0"><stop offset="0" stop-color="#3f78ae"/><stop offset=".45" stop-color="#3a6c9c"/><stop offset=".6" stop-color="#335474"/><stop offset="1" stop-color="#314b66"/></linearGradient></defs><path d="M-10.5 21.6 A24.0 24.0 0 1 1 10.5 21.6" stroke="url(#rc)" stroke-width="5.4" fill="none"/><polygon points="0.0,-21.4 0.7,-21.3 1.5,-21.2 2.2,-20.9 2.9,-20.5 3.5,-20.1 4.2,-19.7 4.8,-19.2 5.4,-18.8 6.0,-18.5 6.6,-18.2 7.3,-18.0 8.0,-17.9 8.7,-17.8 9.4,-17.7 10.2,-17.7 11.0,-17.6 11.7,-17.4 12.5,-17.2 13.1,-16.8 13.8,-16.4 14.3,-15.9 14.7,-15.3 15.1,-14.6 15.4,-13.9 15.6,-13.1 15.8,-12.4 16.0,-11.6 16.2,-11.0 16.5,-10.3 16.8,-9.7 17.2,-9.1 17.6,-8.6 18.1,-8.1 18.6,-7.5 19.2,-7.0 19.7,-6.4 20.2,-5.8 20.6,-5.1 20.9,-4.4 21.1,-3.7 21.1,-3.0 21.1,-2.2 20.9,-1.5 20.7,-0.7 20.4,-0.0 20.1,0.7 19.8,1.4 19.5,2.0 19.3,2.7 19.1,3.4 19.0,4.0 19.0,4.7 19.0,5.5 19.1,6.2 19.2,7.0 19.2,7.8 19.2,8.5 19.1,9.3 18.9,10.0 18.5,10.7 18.1,11.3 17.6,11.9 17.0,12.3 16.3,12.7 15.6,13.1 14.9,13.4 14.3,13.8 13.6,14.1 13.0,14.5 12.5,14.9 12.0,15.3 11.5,15.8 11.1,16.4 10.6,17.0 10.2,17.7 9.7,18.3 9.2,18.9 8.6,19.4 8.0,19.8 7.3,20.1 6.6,20.3 5.8,20.4 5.1,20.4 4.3,20.3 3.5,20.1 2.8,19.9 2.1,19.7 1.4,19.5 0.7,19.4 0.0,19.4 -0.7,19.4 -1.4,19.5 -2.1,19.7 -2.8,19.9 -3.5,20.1 -4.3,20.3 -5.1,20.4 -5.8,20.4 -6.6,20.3 -7.3,20.1 -8.0,19.8 -8.6,19.4 -9.2,18.9 -9.7,18.3 -10.2,17.7 -10.6,17.0 -11.1,16.4 -11.5,15.8 -12.0,15.3 -12.5,14.9 -13.0,14.5 -13.6,14.1 -14.3,13.8 -14.9,13.4 -15.6,13.1 -16.3,12.7 -17.0,12.3 -17.6,11.9 -18.1,11.3 -18.5,10.7 -18.9,10.0 -19.1,9.3 -19.2,8.5 -19.2,7.8 -19.2,7.0 -19.1,6.2 -19.0,5.5 -19.0,4.7 -19.0,4.0 -19.1,3.4 -19.3,2.7 -19.5,2.0 -19.8,1.4 -20.1,0.7 -20.4,0.0 -20.7,-0.7 -20.9,-1.5 -21.1,-2.2 -21.1,-3.0 -21.1,-3.7 -20.9,-4.4 -20.6,-5.1 -20.2,-5.8 -19.7,-6.4 -19.2,-7.0 -18.6,-7.5 -18.1,-8.1 -17.6,-8.6 -17.2,-9.1 -16.8,-9.7 -16.5,-10.3 -16.2,-11.0 -16.0,-11.6 -15.8,-12.4 -15.6,-13.1 -15.4,-13.9 -15.1,-14.6 -14.7,-15.3 -14.3,-15.9 -13.8,-16.4 -13.1,-16.8 -12.5,-17.2 -11.7,-17.4 -11.0,-17.6 -10.2,-17.7 -9.4,-17.7 -8.7,-17.8 -8.0,-17.9 -7.3,-18.0 -6.6,-18.2 -6.0,-18.5 -5.4,-18.8 -4.8,-19.2 -4.2,-19.7 -3.5,-20.1 -2.9,-20.5 -2.2,-20.9 -1.5,-21.2 -0.7,-21.3" fill="url(#gc)"/><path d="M-9.5 -15.2 L-2.2 -16.4 M2.2 -16.4 L9.5 -15.2" stroke="#b0b8c0" stroke-width=".9" fill="none" opacity=".85"/><g transform="rotate(0)"><path d="M-1.15 -17 L1.15 -17 L0.9 2.5 L-0.9 2.5 Z" fill="#86b8e6"/></g></svg>
<svg class="a" style="left:597px;top:416px" width="60" height="60" viewBox="-30 -30 60 60"><defs><radialGradient id="gd" cx=".5" cy=".3" r=".75"><stop offset="0" stop-color="#2c2e30"/><stop offset=".7" stop-color="#1a1b1d"/><stop offset="1" stop-color="#101112"/></radialGradient><linearGradient id="rd" x1="0" y1="0" x2="1" y2="0"><stop offset="0" stop-color="#3f78ae"/><stop offset=".45" stop-color="#3a6c9c"/><stop offset=".6" stop-color="#335474"/><stop offset="1" stop-color="#314b66"/></linearGradient></defs><path d="M-10.5 21.6 A24.0 24.0 0 1 1 10.5 21.6" stroke="#35567a" stroke-width="5.4" fill="none"/><polygon points="0.0,-21.4 0.7,-21.3 1.5,-21.2 2.2,-20.9 2.9,-20.5 3.5,-20.1 4.2,-19.7 4.8,-19.2 5.4,-18.8 6.0,-18.5 6.6,-18.2 7.3,-18.0 8.0,-17.9 8.7,-17.8 9.4,-17.7 10.2,-17.7 11.0,-17.6 11.7,-17.4 12.5,-17.2 13.1,-16.8 13.8,-16.4 14.3,-15.9 14.7,-15.3 15.1,-14.6 15.4,-13.9 15.6,-13.1 15.8,-12.4 16.0,-11.6 16.2,-11.0 16.5,-10.3 16.8,-9.7 17.2,-9.1 17.6,-8.6 18.1,-8.1 18.6,-7.5 19.2,-7.0 19.7,-6.4 20.2,-5.8 20.6,-5.1 20.9,-4.4 21.1,-3.7 21.1,-3.0 21.1,-2.2 20.9,-1.5 20.7,-0.7 20.4,-0.0 20.1,0.7 19.8,1.4 19.5,2.0 19.3,2.7 19.1,3.4 19.0,4.0 19.0,4.7 19.0,5.5 19.1,6.2 19.2,7.0 19.2,7.8 19.2,8.5 19.1,9.3 18.9,10.0 18.5,10.7 18.1,11.3 17.6,11.9 17.0,12.3 16.3,12.7 15.6,13.1 14.9,13.4 14.3,13.8 13.6,14.1 13.0,14.5 12.5,14.9 12.0,15.3 11.5,15.8 11.1,16.4 10.6,17.0 10.2,17.7 9.7,18.3 9.2,18.9 8.6,19.4 8.0,19.8 7.3,20.1 6.6,20.3 5.8,20.4 5.1,20.4 4.3,20.3 3.5,20.1 2.8,19.9 2.1,19.7 1.4,19.5 0.7,19.4 0.0,19.4 -0.7,19.4 -1.4,19.5 -2.1,19.7 -2.8,19.9 -3.5,20.1 -4.3,20.3 -5.1,20.4 -5.8,20.4 -6.6,20.3 -7.3,20.1 -8.0,19.8 -8.6,19.4 -9.2,18.9 -9.7,18.3 -10.2,17.7 -10.6,17.0 -11.1,16.4 -11.5,15.8 -12.0,15.3 -12.5,14.9 -13.0,14.5 -13.6,14.1 -14.3,13.8 -14.9,13.4 -15.6,13.1 -16.3,12.7 -17.0,12.3 -17.6,11.9 -18.1,11.3 -18.5,10.7 -18.9,10.0 -19.1,9.3 -19.2,8.5 -19.2,7.8 -19.2,7.0 -19.1,6.2 -19.0,5.5 -19.0,4.7 -19.0,4.0 -19.1,3.4 -19.3,2.7 -19.5,2.0 -19.8,1.4 -20.1,0.7 -20.4,0.0 -20.7,-0.7 -20.9,-1.5 -21.1,-2.2 -21.1,-3.0 -21.1,-3.7 -20.9,-4.4 -20.6,-5.1 -20.2,-5.8 -19.7,-6.4 -19.2,-7.0 -18.6,-7.5 -18.1,-8.1 -17.6,-8.6 -17.2,-9.1 -16.8,-9.7 -16.5,-10.3 -16.2,-11.0 -16.0,-11.6 -15.8,-12.4 -15.6,-13.1 -15.4,-13.9 -15.1,-14.6 -14.7,-15.3 -14.3,-15.9 -13.8,-16.4 -13.1,-16.8 -12.5,-17.2 -11.7,-17.4 -11.0,-17.6 -10.2,-17.7 -9.4,-17.7 -8.7,-17.8 -8.0,-17.9 -7.3,-18.0 -6.6,-18.2 -6.0,-18.5 -5.4,-18.8 -4.8,-19.2 -4.2,-19.7 -3.5,-20.1 -2.9,-20.5 -2.2,-20.9 -1.5,-21.2 -0.7,-21.3" fill="url(#gd)"/><path d="M-9.5 -15.2 L-2.2 -16.4 M2.2 -16.4 L9.5 -15.2" stroke="#b0b8c0" stroke-width=".9" fill="none" opacity=".85"/><g transform="rotate(206)"><path d="M-1.15 -17 L1.15 -17 L0.9 2.5 L-0.9 2.5 Z" fill="#86b8e6"/></g></svg>
<div class="t" style="left:567px;top:346px;width:120px;text-align:center;font-size:13px;letter-spacing:.1px;color:#f0f0f0">Tone</div>
<div class="t" style="left:663px;top:345px;width:120px;text-align:center;font-size:13px;letter-spacing:.1px;color:#f0f0f0">Feedback</div>
<div class="t" style="left:759px;top:345px;width:120px;text-align:center;font-size:13px;letter-spacing:.1px;color:#f0f0f0">Pan</div>
<div class="t" style="left:567px;top:488px;width:120px;text-align:center;font-size:13px;letter-spacing:.1px;color:#f0f0f0">Duck</div>
<div class="t" style="left:662px;top:490px;width:120px;text-align:center;font-size:13px;letter-spacing:.1px;color:#f0f0f0">Bounce</div>
<div class="a" style="left:646px;top:381px;width:150px;height:2px;background:#b41e22"></div>
<div class="a" style="left:610px;top:370px;width:224px;height:16px;border:1px solid #f4f4f4"></div>
<div class="a" style="left:608px;top:368px;width:5px;height:5px;background:#fff;box-shadow:0 0 0 1px rgba(40,40,40,.6)"></div>
<div class="a" style="left:720px;top:368px;width:5px;height:5px;background:#fff;box-shadow:0 0 0 1px rgba(40,40,40,.6)"></div>
<div class="a" style="left:831px;top:368px;width:5px;height:5px;background:#fff;box-shadow:0 0 0 1px rgba(40,40,40,.6)"></div>
<div class="a" style="left:608px;top:376px;width:5px;height:5px;background:#fff;box-shadow:0 0 0 1px rgba(40,40,40,.6)"></div>
<div class="a" style="left:831px;top:376px;width:5px;height:5px;background:#fff;box-shadow:0 0 0 1px rgba(40,40,40,.6)"></div>
<div class="a" style="left:608px;top:383px;width:5px;height:5px;background:#fff;box-shadow:0 0 0 1px rgba(40,40,40,.6)"></div>
<div class="a" style="left:720px;top:383px;width:5px;height:5px;background:#fff;box-shadow:0 0 0 1px rgba(40,40,40,.6)"></div>
<div class="a" style="left:831px;top:383px;width:5px;height:5px;background:#fff;box-shadow:0 0 0 1px rgba(40,40,40,.6)"></div>
<div class="a" style="left:688px;top:430px;width:68px;height:27px;background:#0e0e0e"></div>
<div class="a" style="left:696px;top:433px;width:54px;height:20px;background:linear-gradient(90deg,#1f1f1f 0 48%,#161616 50%,#1b1b1b);border-radius:2px;border:1px solid #2a2a2a"></div>
<div class="a" style="left:707px;top:440px;width:9px;height:9px;border-radius:5px;background:#8c1616"></div>
<div class="a" style="left:988px;top:302px;width:108px;height:42px;background:#0f0f0f"></div>
<div class="a" style="left:998px;top:307px;width:90px;height:32px;background:linear-gradient(90deg,#202020 0 48%,#141414 50%,#1c1c1c 92%,#101010);border-radius:3px;border:1px solid #2c2c2c"></div>
<div class="a" style="left:1011px;top:315px;width:16px;height:16px;border-radius:8px;background:radial-gradient(#ff2020,#c80c0c 70%,#8a0808)"></div>
<div class="t" style="left:982px;top:362px;width:120px;text-align:center;font-size:28.5px;font-weight:bold;letter-spacing:.6px;color:#e8e8f6;-webkit-text-stroke:.4px #e8e8f6">sync</div>
<div class="a" style="left:944px;top:405px;width:91px;height:47px;background:#3b3b3b;border:2px solid #7c7c7c;border-radius:5px"></div>
<div class="t" style="left:966px;top:414px;width:60px;text-align:center;font-size:30px;letter-spacing:.5px;color:#fff">3</div>
<div class="a" style="left:1048px;top:405px;width:78px;height:47px;background:#3b3b3b;border:2px solid #7c7c7c;border-radius:5px"></div>
<div class="t" style="left:1057px;top:414px;width:60px;text-align:center;font-size:30px;letter-spacing:1px;color:#fff">16</div>
<!-- /RACK CONTENT -->
<!-- PROPS -->
<!-- PROPS CONTENT -->
<div class="a" style="left:254px;top:1030px;width:1512px;height:239px;background:#272727"></div>
<div class="a" style="left:254px;top:1030px;width:1139px;height:24px;background:#565656"></div>
<div class="a" style="left:1393px;top:1030px;width:2px;height:239px;background:#2e2e2e"></div>
<div class="a" style="left:1395px;top:1030px;width:1px;height:239px;background:#9a9a9a"></div>
<div class="a" style="left:1396px;top:1030px;width:3px;height:239px;background:#2e2e2e"></div>
<div class="a" style="left:1399px;top:1030px;width:367px;height:24px;background:#565656"></div>
<div class="pl" style="left:724px;top:1036px;width:200px;text-align:center;font-size:13.5px;letter-spacing:.1px">Widget Properties</div>
<div class="pl" style="left:1489px;top:1036px;width:200px;text-align:center;font-size:13.5px;letter-spacing:.1px">Mapping</div>
<div class="btn" style="left:258px;top:1057px;width:71px;height:22px;background:#4c4c4c"></div>
<div class="pl" style="left:269px;top:1063px;font-size:12.8px;letter-spacing:.05px">General</div>
<div class="pl" style="left:356px;top:1063px;font-size:12.8px;letter-spacing:.05px">MIDI</div>
<div class="pl" style="left:436px;top:1063px;font-size:12.8px;letter-spacing:.05px">Value</div>
<div class="pl" style="left:503px;top:1063px;font-size:12.8px;letter-spacing:.05px">Advanced</div>
<div class="a" style="left:255px;top:1082px;width:1136px;height:1px;background:#b0b0b0"></div>
<div class="pl" style="left:260px;top:1096px">Customize Caption</div>
<div class="tog on" style="left:383px;top:1095px"><i></i></div>
<div class="a" style="left:423px;top:1094px;width:599px;height:18px;background:#545454;border:1px solid #707070"></div>
<div class="a" style="left:428px;top:1109px;width:176px;height:1px;background:#d8d8d8"></div>
<div class="pl" style="left:260px;top:1125px">Display Range</div>
<div class="tog dis" style="left:351px;top:1124px"><i></i></div>
<div class="pl" style="left:396px;top:1125px">Show Value in Caption</div>
<div class="tog dis" style="left:544px;top:1124px"><i></i></div>
<div class="pl" style="left:760px;top:1125px">Lock</div>
<div class="tog on" style="left:811px;top:1124px"><i></i></div>
<div class="pl" style="left:869px;top:1124px">Widget Link</div>
<div class="a" style="left:955px;top:1118px;width:72px;height:24px;background:#545454;border:1px solid #707070"></div>
<div class="pl" style="left:964px;top:1124px;color:#8c8c8c">None</div>
<div class="a" style="left:1013px;top:1124px;width:0;height:0;border-left:4px solid transparent;border-right:4px solid transparent;border-bottom:5px solid #f0f0f0"></div>
<div class="a" style="left:1013px;top:1132px;width:0;height:0;border-left:4px solid transparent;border-right:4px solid transparent;border-top:5px solid #f0f0f0"></div>
<div class="pl" style="left:260px;top:1155px">Show Back Plate</div>
<div class="tog on" style="left:367px;top:1154px"><i></i></div>
<div class="pl" style="left:412px;top:1155px">Hide Temporary Value</div>
<div class="tog off" style="left:559px;top:1154px"><i></i></div>
<div class="pl" style="left:760px;top:1155px">Hide</div>
<div class="tog off" style="left:811px;top:1154px"><i></i></div>
<div class="a" style="left:255px;top:1178px;width:480px;height:1px;background:#b0b0b0"></div>
<div class="btn" style="left:261px;top:1191px;width:94px;height:30px"></div>
<div class="pl" style="left:261px;top:1200px;width:94px;text-align:center">Font</div>
<div class="pl" style="left:372px;top:1198px">Font Size</div>
<div class="a" style="left:442px;top:1194px;width:47px;height:20px;background:#3a3a3a"></div>
<div class="pl" style="left:447px;top:1198px">15</div>
<div class="pl" style="left:490px;top:1198px">Text Position</div>
<div class="a" style="left:593px;top:1192px;width:136px;height:24px;background:#545454;border:1px solid #7a7a7a"></div>
<div class="pl" style="left:599px;top:1198px">Centered</div>
<div class="a" style="left:715px;top:1198px;width:0;height:0;border-left:4px solid transparent;border-right:4px solid transparent;border-bottom:5px solid #f0f0f0"></div>
<div class="a" style="left:715px;top:1206px;width:0;height:0;border-left:4px solid transparent;border-right:4px solid transparent;border-top:5px solid #f0f0f0"></div>
<div class="btn" style="left:261px;top:1235px;width:94px;height:30px"></div>
<div class="pl" style="left:261px;top:1237px;width:94px;text-align:center">Text Color</div>
<div class="a" style="left:268px;top:1253px;width:80px;height:9px;background:#fb0007;border-radius:2.5px"></div>
<div class="btn" style="left:371px;top:1235px;width:94px;height:30px"></div>
<div class="pl" style="left:371px;top:1237px;width:94px;text-align:center">Fill Color</div>
<div class="btn" style="left:482px;top:1235px;width:94px;height:30px"></div>
<div class="pl" style="left:482px;top:1237px;width:94px;text-align:center">Outline Color</div>
<div class="pl" style="left:545px;top:1230px;width:120px;text-align:right">Roundness</div>
<div class="a" style="left:673px;top:1226px;width:56px;height:20px;background:#3a3a3a"></div>
<div class="pl" style="left:678px;top:1230px">0</div>
<div class="pl" style="left:545px;top:1254px;width:120px;text-align:right">Thickness</div>
<div class="a" style="left:673px;top:1250px;width:56px;height:20px;background:#3a3a3a"></div>
<div class="pl" style="left:678px;top:1254px">2</div>
<div class="pl" style="left:1412px;top:1060px">Plugin</div>
<div class="btn" style="left:1686px;top:1057px;width:90px;height:22px"></div>
<div class="pl" style="left:1694px;top:1062px;letter-spacing:-.2px">Open plugin</div>
<div class="a" style="left:1407px;top:1083px;width:370px;height:23px;background:#545454;border:1px solid #707070"></div>
<div class="pl" style="left:1413px;top:1088px">(no plugin)</div>
<div class="a" style="left:1761px;top:1088px;width:0;height:0;border-left:4px solid transparent;border-right:4px solid transparent;border-bottom:5px solid #f0f0f0"></div>
<div class="a" style="left:1761px;top:1096px;width:0;height:0;border-left:4px solid transparent;border-right:4px solid transparent;border-top:5px solid #f0f0f0"></div>
<div class="pl" style="left:1412px;top:1116px">Parameter</div>
<div class="a" style="left:1409px;top:1130px;width:360px;height:1px;background:#c0c0c0"></div>
<div class="pl" style="left:1489px;top:1162px;width:200px;text-align:center;font-size:11px;letter-spacing:.2px;color:#8a8a8a">no parameters</div>
<div class="a" style="left:1409px;top:1249px;width:360px;height:1px;background:#c0c0c0"></div>
<!-- /PROPS CONTENT -->
<!-- MENUS -->
<!-- MENUS CONTENT -->
<div class="menu" style="left:782px;top:381px;width:183px;height:276px"></div>
<div class="a" style="left:783px;top:536px;width:181px;height:20px;background:#4480b8"></div>
<div class="mi" style="left:808px;top:388px;letter-spacing:0.06px">Copy</div>
<div class="sc" style="left:861px;top:389px;width:100px;text-align:right">ctrl + C</div>
<div class="mi" style="left:808px;top:410px;letter-spacing:0.05px">Paste</div>
<div class="sc" style="left:861px;top:411px;width:100px;text-align:right">ctrl + V</div>
<div class="mi" style="left:808px;top:432px;letter-spacing:0.25px">Paste special</div>
<div class="arr" style="left:956px;top:435px"></div>
<div class="mi" style="left:808px;top:454px;letter-spacing:0.47px">Duplicate</div>
<div class="sc" style="left:861px;top:455px;width:100px;text-align:right">ctrl + D</div>
<div class="mi" style="left:808px;top:486px;letter-spacing:0.33px">Remove</div>
<div class="mi" style="left:808px;top:518px;letter-spacing:0.57px">Map to plugin</div>
<div class="arr" style="left:956px;top:521px"></div>
<div class="mi" style="left:808px;top:540px;letter-spacing:0.40px">Operations</div>
<div class="arr" style="left:956px;top:543px"></div>
<div class="mi" style="left:808px;top:572px;letter-spacing:0.64px">Bring forward</div>
<div class="mi" style="left:808px;top:594px;letter-spacing:0.76px">Bring to front</div>
<div class="mi" style="left:808px;top:616px;letter-spacing:0.50px">Send backward</div>
<div class="mi" style="left:808px;top:638px;letter-spacing:0.53px">Send to back</div>
<div class="sep" style="left:787px;top:477px;width:173px"></div>
<div class="sep" style="left:787px;top:509px;width:173px"></div>
<div class="sep" style="left:787px;top:562px;width:173px"></div>
<div class="menu" style="left:965px;top:535px;width:234px;height:191px"></div>
<div class="mi" style="left:991px;top:542px;letter-spacing:0.60px">Show/Hide</div>
<div class="arr" style="left:1189px;top:544px"></div>
<div class="mi" style="left:991px;top:564px;letter-spacing:0.36px">Locking</div>
<div class="arr" style="left:1189px;top:566px"></div>
<div class="mi" style="left:991px;top:586px;letter-spacing:0.63px">Variations</div>
<div class="arr" style="left:1189px;top:588px"></div>
<div class="mi" style="left:991px;top:608px;letter-spacing:0.63px">Widget links...</div>
<div class="mi" style="left:991px;top:630px;letter-spacing:0.48px">Radio groups...</div>
<div class="mi" style="left:991px;top:685px;letter-spacing:0.32px">Load GP User Preset...</div>
<div class="mi" style="left:991px;top:707px;letter-spacing:0.32px">Save GP User Preset...</div>
<div class="mi" style="left:979px;top:658px;font-weight:bold;font-size:14.5px;letter-spacing:1.1px">Preset Management</div>
<!-- /MENUS CONTENT -->
</body>
</html>
